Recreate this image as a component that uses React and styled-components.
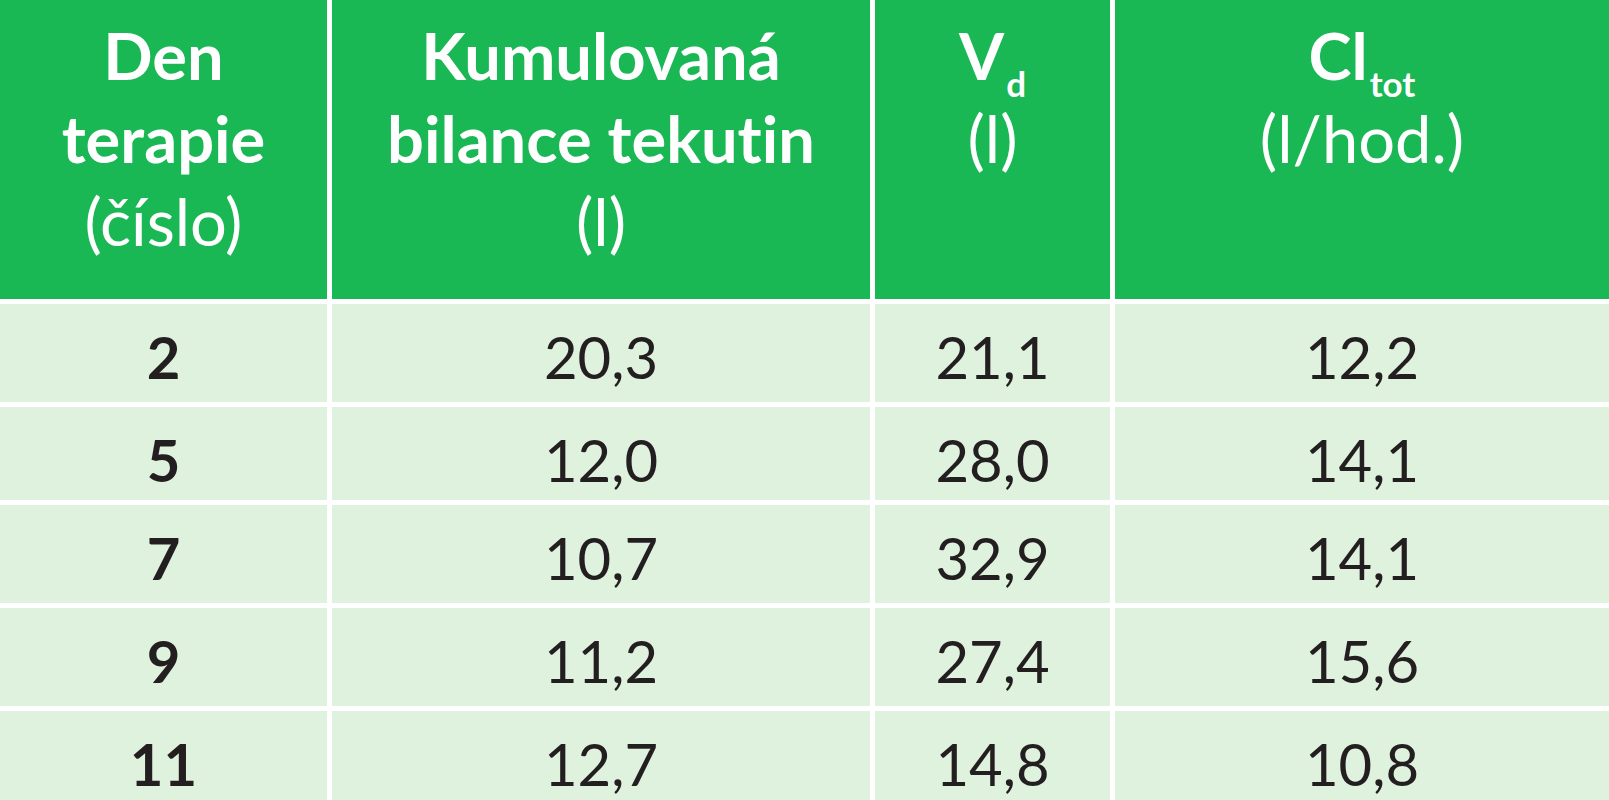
import styled, { createGlobalStyle } from "styled-components";

const GlobalStyle = createGlobalStyle`
  html, body {
    margin: 0;
    padding: 0;
    background: #ffffff;
    overflow: hidden;
  }
  body {
    font-family: Lato, "Open Sans", sans-serif;
    font-variant-ligatures: none;
  }
`;

const headers = [
  { title: ["Den", "terapie"], unit: "(číslo)" },
  { title: ["Kumulovaná", "bilance tekutin"], unit: "(l)" },
  { title: ["V"], sub: "d", unit: "(l)" },
  { title: ["Cl"], sub: "tot", unit: "(l/hod.)" },
];

const rows = [
  ["2", "20,3", "21,1", "12,2"],
  ["5", "12,0", "28,0", "14,1"],
  ["7", "10,7", "32,9", "14,1"],
  ["9", "11,2", "27,4", "15,6"],
  ["11", "12,7", "14,8", "10,8"],
];

export default function App() {
  return (
    <>
      <GlobalStyle />
      <Table>
        {headers.map((h, i) => (
          <HeaderCell key={i}>
            {h.title.map((line, j) => (
              <HeadLine key={j}>
                {line}
                {h.sub && <Sub>{h.sub}</Sub>}
              </HeadLine>
            ))}
            <Unit>{h.unit}</Unit>
          </HeaderCell>
        ))}
        {rows.map((row, r) =>
          row.map((value, c) => (
            <Cell key={`${r}-${c}`} $bold={c === 0}>
              {value}
            </Cell>
          ))
        )}
      </Table>
    </>
  );
}

const Table = styled.div`
  display: grid;
  grid-template-columns: 327px 538px 235px 1fr;
  grid-template-rows: 299px 98px 93px 98px 98px 98px;
  gap: 5px;
  width: 1609px;
`;

const HeaderCell = styled.div`
  display: flex;
  flex-direction: column;
  align-items: center;
  padding-top: 14px;
  background: #1ab755;
  color: #ffffff;
  font-size: 65px;
  line-height: 83px;
  text-align: center;
`;

const HeadLine = styled.div`
  font-weight: 700;
  white-space: nowrap;
`;

const Sub = styled.span`
  font-size: 35px;
  line-height: 0;
  vertical-align: -17px;
  margin-left: 2px;
`;

const Unit = styled.div`
  font-weight: 400;
  white-space: nowrap;
`;

const Cell = styled.div`
  display: flex;
  justify-content: center;
  padding-top: 18px;
  background: #dff2de;
  color: #231f20;
  font-size: 58px;
  line-height: 70px;
  font-weight: ${(props) => (props.$bold ? 700 : 400)};
`;
